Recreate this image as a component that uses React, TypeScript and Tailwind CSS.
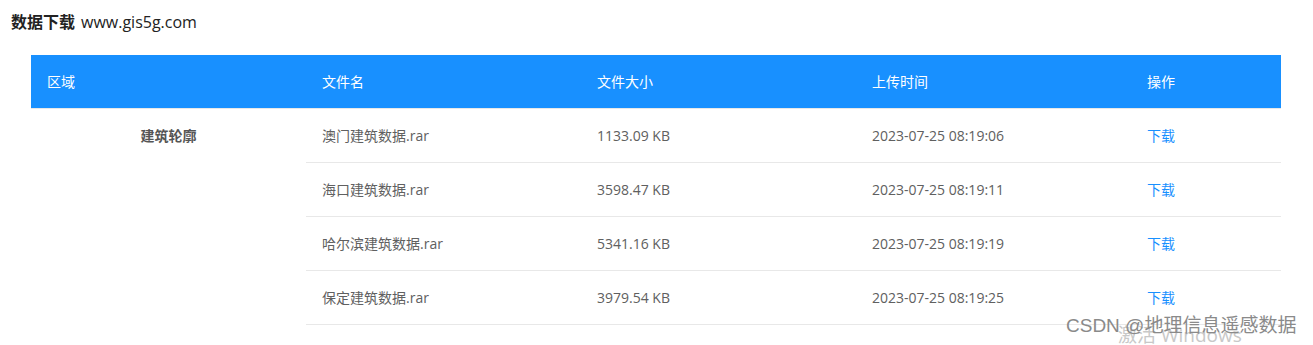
const rows = [
  { name: "澳门建筑数据.rar", size: "1133.09 KB", time: "2023-07-25 08:19:06" },
  { name: "海口建筑数据.rar", size: "3598.47 KB", time: "2023-07-25 08:19:11" },
  { name: "哈尔滨建筑数据.rar", size: "5341.16 KB", time: "2023-07-25 08:19:19" },
  { name: "保定建筑数据.rar", size: "3979.54 KB", time: "2023-07-25 08:19:25" },
];

const font = "font-['Segoe_UI','Open_Sans','Noto_Sans_CJK_SC',sans-serif]";

export default function App() {
  return (
    <div className={`relative h-[345px] w-[1313px] overflow-hidden bg-white ${font}`}>
      <div className="flex items-baseline gap-[6px] pl-[11px] pt-[10px] text-[#222]">
        <span className="text-[16px] font-bold">数据下载</span>
        <span className="text-[16px]">www.gis5g.com</span>
      </div>

      <div className="ml-[31px] mt-[21px] w-[1250px] text-[14px]">
        <div className="grid h-[53px] grid-cols-[275px_275px_275px_275px_150px] items-center bg-[#1890ff] text-white">
          <div className="pl-[16px]">区域</div>
          <div className="pl-[16px]">文件名</div>
          <div className="pl-[16px]">文件大小</div>
          <div className="pl-[16px]">上传时间</div>
          <div className="pl-[16px]">操作</div>
        </div>
        <div className="h-px bg-[#e8e8e8]" />

        <div className="grid grid-cols-[275px_975px]">
          <div className="flex h-[53px] items-center justify-center font-bold text-[#555]">
            建筑轮廓
          </div>
          <div className="flex flex-col">
            {rows.map((r) => (
              <div
                key={r.name}
                className="grid h-[54px] grid-cols-[275px_275px_275px_150px] items-center border-b border-[#e8e8e8] text-[#606060]"
              >
                <div className="pl-[16px]">{r.name}</div>
                <div className="pl-[16px]">{r.size}</div>
                <div className="pl-[16px]">{r.time}</div>
                <div className="pl-[16px] text-[#1890ff]">下载</div>
              </div>
            ))}
          </div>
        </div>
      </div>

      <div className="pointer-events-none absolute left-[1118px] top-[326px] text-[19px] leading-none text-[#c8c8c8]">
        激活 Windows
      </div>
      <div className="pointer-events-none absolute left-[1066px] top-[316px] font-['Liberation_Sans','Noto_Sans_CJK_SC',sans-serif] text-[19px] leading-none text-[#8a8a8a]">
        CSDN @地理信息遥感数据
      </div>
    </div>
  );
}
